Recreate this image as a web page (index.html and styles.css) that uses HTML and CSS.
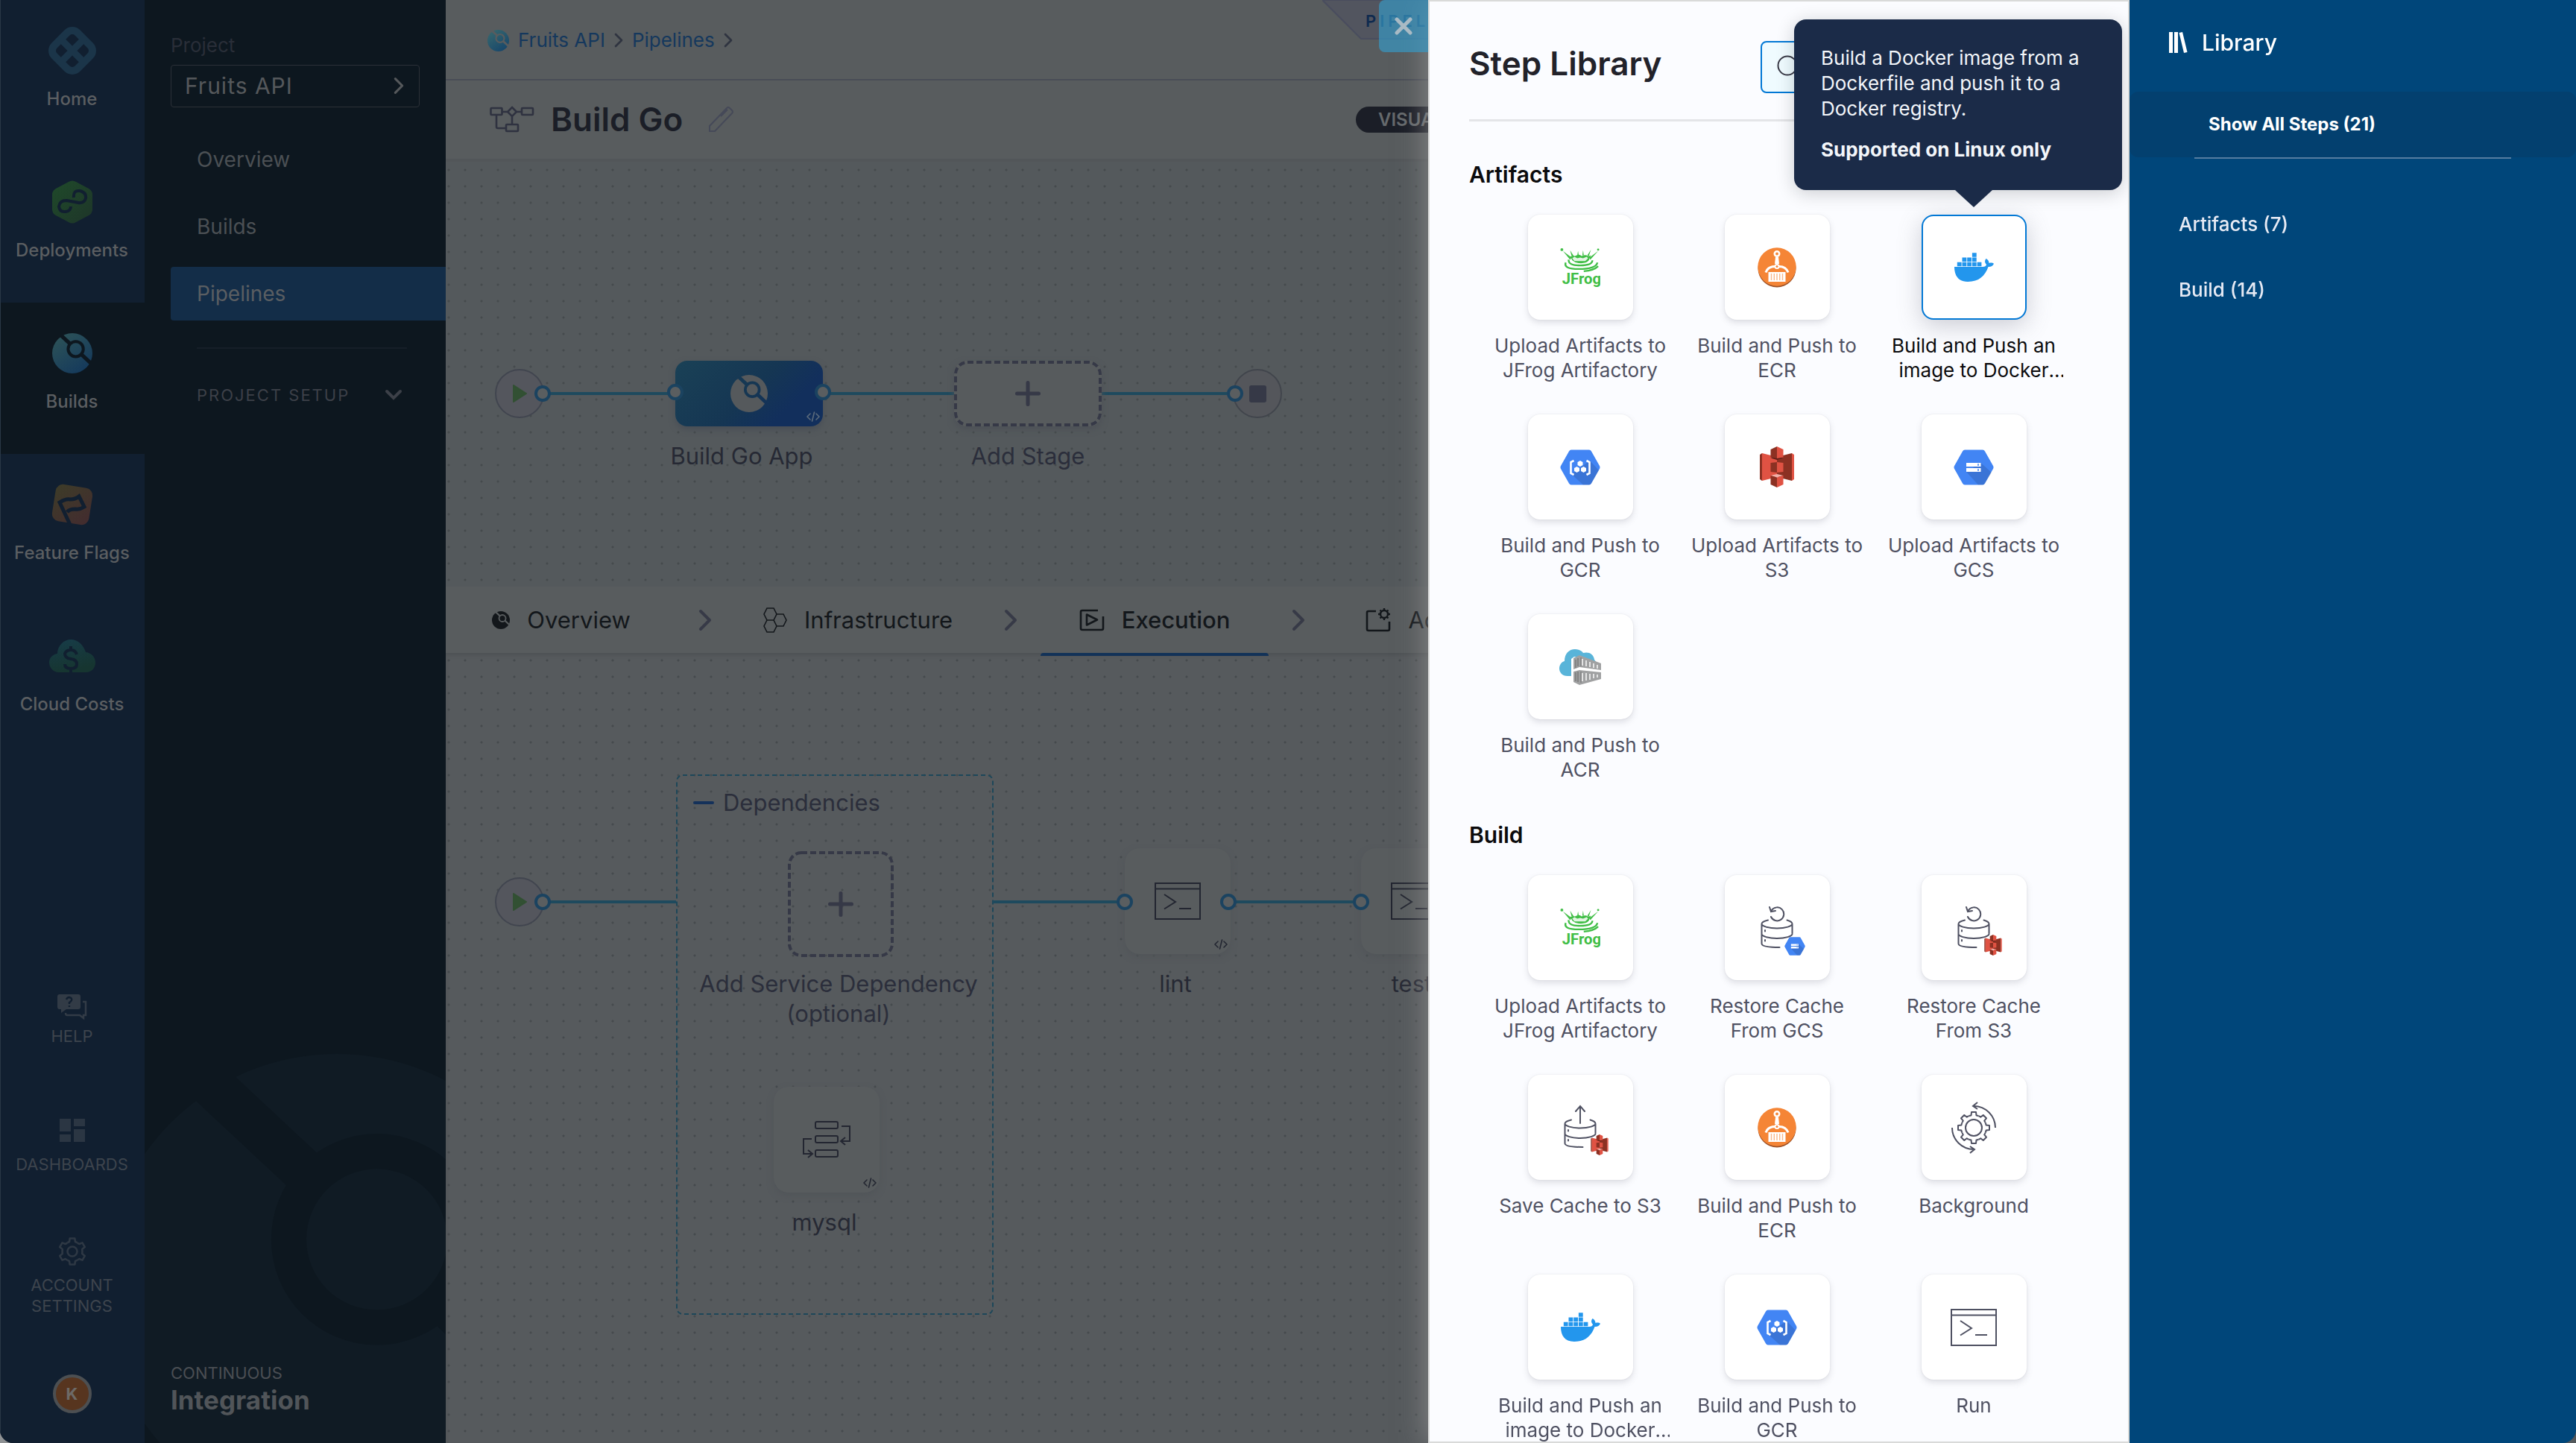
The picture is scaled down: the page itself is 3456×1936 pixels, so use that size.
FILE: index.html
```html
<!DOCTYPE html>
<html lang="en">
<head>
<meta charset="utf-8">
<title>Build Go - Pipeline Studio</title>
<link rel="stylesheet" href="styles.css">
</head>
<body>
<svg class="defs" width="0" height="0" aria-hidden="true">
  <defs>
    <linearGradient id="g-ci" x1="0" y1="0" x2="0.7" y2="1"><stop offset="0" stop-color="#2f5557"/><stop offset="1" stop-color="#153a5c"/></linearGradient>
    <linearGradient id="g-crumb" x1="0" y1="0" x2="0.7" y2="1"><stop offset="0" stop-color="#3a6a6e"/><stop offset="1" stop-color="#17476b"/></linearGradient>
    <linearGradient id="g-cd" x1="0" y1="0" x2="1" y2="1"><stop offset="0" stop-color="#1f4a2a"/><stop offset="1" stop-color="#1e3529"/></linearGradient>
    <linearGradient id="g-ff" x1="0" y1="0" x2="1" y2="1"><stop offset="0" stop-color="#3d3c28"/><stop offset="1" stop-color="#432b2f"/></linearGradient>
    <linearGradient id="g-cc" x1="0" y1="0" x2="0.3" y2="1"><stop offset="0" stop-color="#173c49"/><stop offset="1" stop-color="#163530"/></linearGradient>
    <mask id="m-ci" maskUnits="userSpaceOnUse" x="-100" y="-100" width="200" height="200">
      <circle r="100" fill="#fff"/>
      <path d="M17-21L-90-121M17-21L124 79" stroke="#000" stroke-width="19"/>
      <circle cx="17" cy="-21" r="45" fill="#000"/>
      <circle cx="17" cy="-21" r="30" fill="#fff"/>
    </mask>
    <symbol id="i-ci" viewBox="-100 -100 200 200"><rect x="-100" y="-100" width="200" height="200" mask="url(#m-ci)"/></symbol>
    <symbol id="i-code" viewBox="0 0 18 14"><path d="M5 3L1 7l4 4M13 3l4 4-4 4M10.500 1l-3 12" fill="none" stroke="currentColor" stroke-width="1.600" stroke-linecap="round" stroke-linejoin="round"/></symbol>
    <symbol id="i-chev" viewBox="0 0 18 30"><path d="M3 3l12 12L3 27" fill="none" stroke="currentColor" stroke-width="4" stroke-linecap="round" stroke-linejoin="round"/></symbol>
    <symbol id="i-plus" viewBox="0 0 34 34"><path d="M17 2.500v29M2.500 17h29" stroke="currentColor" stroke-width="5" stroke-linecap="round"/></symbol>
    <symbol id="i-term" viewBox="0 0 64 50"><path d="M2 1h60v48H2zM2 8.500h60M14 16l15 10-15 9.500M34 35h16" fill="none" stroke="currentColor" stroke-width="2"/></symbol>
    <symbol id="i-s3" viewBox="0 0 46 55">
      <path d="M0 11l3-2v37l-3-2z" fill="#8c3123"/><path d="M3 9l20 5v27L3 46z" fill="#e05243"/>
      <path d="M43 9l-20 5v27l20 5z" fill="#8c3123"/><path d="M46 11l-3-2v37l3-2z" fill="#e05243"/>
      <path d="M14.500 22l8.500-1v14l-8.500-1z" fill="#8c3123"/><path d="M31.500 22L23 21v14l8.500-1z" fill="#e05243"/>
      <path d="M14.500 15.500L23 14l8.500 1.500L23 18z" fill="#5e1f18"/><path d="M14.500 39L23 37l8.500 2-8.500 2.500z" fill="#f2b0a9"/>
      <path d="M14.500 4L23 0v16l-8.500-1.500z" fill="#8c3123"/><path d="M31.500 4L23 0v16l8.500-1.500z" fill="#e05243"/>
      <path d="M14.500 39l8.500 2.500V55l-8.500-4z" fill="#8c3123"/><path d="M31.500 39L23 41.500V55l8.500-4z" fill="#e05243"/>
    </symbol>
    <symbol id="i-hex" viewBox="0 0 54 48"><path d="M15 .5h24q2 0 3 2L53 22q1 2 0 4L42 45.500q-1 2-3 2H15q-2 0-3-2L1 26q-1-2 0-4L12 2.500q1-2 3-2z" fill="#4285f4"/></symbol>
    <symbol id="i-gcs" viewBox="0 0 54 48"><use href="#i-hex"/><path d="M36.500 18L51 31l-9 14.500q-1 2-3 2h-6L17 30z" fill="#000" opacity=".12"/><path d="M17 18h19.500v5H17zM17 25h19.500v5H17z" fill="#fff"/><path d="M33 19v3M33 26v3" stroke="#4285f4" stroke-width="1.500"/></symbol>
    <symbol id="i-gcr" viewBox="0 0 54 48"><use href="#i-hex"/><path d="M40 15l12 13-10 17.500q-1 2-3 2H31L15 33z" fill="#000" opacity=".12"/><path d="M18.500 15l-4 2v15l4 2M35.500 15l4 2v15l-4 2" fill="none" stroke="#fff" stroke-width="2.600"/><path d="M27 15l3.500 2v4L27 23l-3.500-2v-4zM22.500 23l3.500 2v4l-3.500 2-3.500-2v-4zM31.500 23l3.500 2v4l-3.500 2-3.500-2v-4z" fill="#fff"/></symbol>
    <symbol id="i-ecr" viewBox="0 0 52 54">
      <circle cx="26" cy="28" r="25.500" fill="#9d5025"/><circle cx="26" cy="26" r="25.700" fill="#f58536"/>
      <circle cx="26" cy="8.500" r="3.200" fill="none" stroke="#fff" stroke-width="2.600"/><path d="M24 13h4l1 9h-6z" fill="#fff"/>
      <circle cx="26" cy="25.500" r="2.600" fill="none" stroke="#fff" stroke-width="2"/>
      <path d="M23 25.500q-9 0-12 8M29 25.500q9 0 12 8" fill="none" stroke="#fff" stroke-width="3.200"/>
      <path d="M14.500 33h23v13h-23z" fill="#fff"/><path d="M18.500 35v9M22.300 35v9M26 35v9M29.700 35v9M33.500 35v9" stroke="#f9b78a" stroke-width="1.400"/>
    </symbol>
    <symbol id="i-docker" viewBox="0 0 53 39">
      <path d="M0 19h38c3 0 4.500-1 5-3-3-3-2-6-.5-8 2.500 1 4 3.500 4 6 2.500-.8 5-.5 6.500.8-1 3-4 4.500-7.500 4.300C41 31.500 33 39 18 39 5 39 0 30.500 0 19z" fill="#2396ed"/>
      <path d="M3.800 12.700h5.800v5.600H3.800zM10.500 12.700h5.800v5.600h-5.800zM17.200 12.700H23v5.600h-5.800zM23.900 12.700h5.800v5.600h-5.800zM30.600 12.700h5.800v5.600h-5.800zM10.500 6.500h5.800v5.500h-5.800zM17.200 6.500H23V12h-5.800zM23.900 6.500h5.800V12h-5.800zM23.900.3h5.800v5.500h-5.800z" fill="#2396ed"/>
    </symbol>
    <symbol id="i-jfrog" viewBox="0 0 56 56">
      <g fill="#40be46"><path d="M14 12q2 1 4-1 2 2 5 0 4-2 7 1 4-2 7-1 2 2 6 0l-3 7q-3 4-11 4t-12-4z"/>
      <circle cx="2.500" cy="3" r="2"/><path d="M4 5l12 9-2 3z"/><path d="M53 5L41 14l1 3z"/><circle cx="53" cy="3" r="1.500"/><path d="M14 4l5 8h-3zM43 3l-3 9-2-1zM25 5l1 6h-2zM32 4l-1 7h2z"/></g>
      <g fill="none" stroke="#40be46" stroke-width="2.400"><path d="M12 17q-1 8 16 8t17-7"/><path d="M8 21q-4 9 18 9 24 0 26-9"/><path d="M33 33q14-1 20-7"/></g>
      <path d="M17 15l3-2 4 2 4-1 4 1 5-2 2 2-4 4H20z" fill="#fff" opacity=".85"/>
      <text x="30" y="51" class="jfrog-text" text-anchor="middle">JFrog</text>
    </symbol>
    <symbol id="i-acr" viewBox="0 0 56 48">
      <path d="M16 36h-5C4 36 0 31 0 26c0-5 3-9 7-10C7 6 13 0 21 0c5 0 9 2 11 5 7-2 14 1 15 9l3 4-30-8-4 3z" fill="#59b4d9"/>
      <path d="M19 12l8-4 29 11v9L27 24l-8 3z" fill="#a0a1a2"/><path d="M19 30l8-2 29 3v9l-29 8-8-4z" fill="#a0a1a2"/>
      <path d="M22 14v11M25 12v11M22 31v12M25 30v14" stroke="#7a7a7a" stroke-width="1.500"/>
      <path d="M31 13v9M36 15v8M41 17v7M46 19v6M51 21v5M31 32v11M36 32v10M41 33v8M46 33v6M51 34v4" stroke="#e3e3e3" stroke-width="2"/>
      <path d="M29 11v12M29 30v15" stroke="#7a7a7a" stroke-width="1.200"/>
    </symbol>
    <symbol id="i-db" viewBox="0 0 76 76"><g fill="none" stroke="#4f5162" stroke-width="2" stroke-linecap="round">
      <path d="M26 27.500q-8.500 2-8.500 5c0 3 9 6 20.500 6s20.500-3 20.500-6q0-3-7-5M17.500 33v26q0 5 24 5M58.500 33v12M17.500 46c0 3 9 6 20.500 6s20.500-3 20.500-6"/><path d="M22 41v1.500M22 54v1.500"/></g></symbol>
    <symbol id="i-restore" viewBox="0 0 76 76"><use href="#i-db"/><path d="M31 14a9 9 0 1 1-1 9M28 10l2 6 6-1" fill="none" stroke="#4f5162" stroke-width="2" stroke-linecap="round"/></symbol>
    <symbol id="i-save" viewBox="0 0 76 76"><use href="#i-db"/><path d="M38 32V9M32 16l6-7 6 7" fill="none" stroke="#4f5162" stroke-width="2" stroke-linecap="round"/></symbol>
    <symbol id="i-gear8" viewBox="-35 -35 70 70">
      <path id="t8" d="M-6.500-15.700Q-5-16.400-3.500-16.600L-3-21H3l.5 4.400q1.500.2 3 .9" fill="none" stroke="currentColor" stroke-width="2" stroke-linejoin="round"/>
      <use href="#t8" transform="rotate(45)"/><use href="#t8" transform="rotate(90)"/><use href="#t8" transform="rotate(135)"/><use href="#t8" transform="rotate(180)"/><use href="#t8" transform="rotate(225)"/><use href="#t8" transform="rotate(270)"/><use href="#t8" transform="rotate(315)"/>
      <circle r="11" fill="none" stroke="currentColor" stroke-width="2"/>
      <path d="M29 0A29 29 0 0 0 0-29M5-34l-6 5 6 4M-29 0A29 29 0 0 0 0 29M-5 34l6-5-6-4" fill="none" stroke="currentColor" stroke-width="2"/>
    </symbol>
  </defs>
</svg>

<div class="app">
  <nav class="rail" aria-label="Modules">
    <a class="module" href="#home"><svg class="module-icon" viewBox="-34 -34 68 68" aria-hidden="true"><g transform="rotate(45)" fill="none" stroke="#1b3549"><rect x="-22" y="-22" width="44" height="44" rx="10" stroke-width="10"/><path d="M0-24v48M-24 0h48" stroke-width="9"/></g></svg>Home</a>
    <a class="module" href="#deployments"><svg class="module-icon" viewBox="-34 -34 68 68" aria-hidden="true"><path d="M-5-27q5-3 10 0l17 9q5 3 5 8v20q0 5-5 8L5 27q-5 3-10 0l-17-9q-5-3-5-8v-20q0-5 5-8z" fill="url(#g-cd)"/><path d="M2-6q-1-10 8-9 9 2 8 10-2 7-10 6Q-2-1-8-2q-9 0-10 8 1 8 9 7 7-1 7-7" fill="none" stroke="#111f30" stroke-width="4"/></svg>Deployments</a>
    <a class="module is-active" href="#builds"><svg class="module-icon ci-mark" viewBox="-34 -34 68 68" aria-hidden="true"><use href="#i-ci" x="-27" y="-27" width="54" height="54" fill="url(#g-ci)"/></svg>Builds</a>
    <a class="module" href="#flags"><svg class="module-icon" viewBox="-34 -34 68 68" aria-hidden="true"><rect x="-25" y="-25" width="50" height="50" rx="10" fill="url(#g-ff)" transform="rotate(9)"/><path d="M-2 29l-15-32q8-5 14-4 7 0 12-4L16 3q-6 4-12 3-8 0-11 4" fill="none" stroke="#111f30" stroke-width="5"/></svg>Feature Flags</a>
    <a class="module" href="#costs"><svg class="module-icon" viewBox="-34 -34 68 68" aria-hidden="true"><path d="M-18 22h36c8 0 13-6 13-13S26-4 18-5c-3-10-11-17-20-17S-20-14-20-3c-7 1-11 6-11 12s5 13 13 13z" fill="url(#g-cc)"/><path d="M-2-13v5M-2 15v8M6-2q-2-6-8-6t-8 5q0 6 8 7t8 7q0 6-8 6t-8-6" fill="none" stroke="#111f30" stroke-width="4"/></svg>Cloud Costs</a>
    <div class="rail-foot">
      <a class="util util-help" href="#help"><svg width="40" height="38" viewBox="0 0 40 38" aria-hidden="true"><path d="M3 2h25q3 0 3 3v14q0 3-3 3H12l-7 5v-5H3q-3 0-3-3V5q0-3 3-3z" fill="#323b46"/><path d="M34 12h4v18h-3v4l-5-4H13q-2 0-2-3" fill="none" stroke="#323b46" stroke-width="2.500"/><path d="M12 9q1-3 4-3 4 1 3 4-1 2-3 3v2M16 17v2" fill="none" stroke="#111f30" stroke-width="2.400"/></svg>HELP</a>
      <a class="util" href="#dashboards"><svg width="34" height="38" viewBox="0 0 34 38" aria-hidden="true"><path d="M0 3h15v17H0zM19 3h15v10H19zM0 24h15v10H0zM19 17h15v17H19z" fill="#2b3643"/></svg>DASHBOARDS</a>
      <a class="util util-account" href="#account"><svg width="38" height="38" viewBox="-19 -19 38 38" aria-hidden="true"><g fill="none" stroke="#2e3844" stroke-width="2.600" stroke-linejoin="round"><path id="t6" d="M-6.700-11.600Q-5-12.500-4-13l.7-4.500h6.600L4-13q1 .5 2.700 1.400"/><use href="#t6" transform="rotate(60)"/><use href="#t6" transform="rotate(120)"/><use href="#t6" transform="rotate(180)"/><use href="#t6" transform="rotate(240)"/><use href="#t6" transform="rotate(300)"/><circle r="6.500"/></g></svg>ACCOUNT SETTINGS</a>
      <button class="avatar" type="button">K</button>
    </div>
  </nav>

  <aside class="project-nav">
    <svg class="watermark" viewBox="-100 -100 200 200" aria-hidden="true"><use href="#i-ci" x="-100" y="-100" width="200" height="200"/></svg>
    <p class="project-label">Project</p>
    <button class="project-select" type="button">Fruits API<svg width="14" height="24" viewBox="0 0 18 30" aria-hidden="true"><use href="#i-chev"/></svg></button>
    <ul class="menu">
      <li><a href="#overview">Overview</a></li>
      <li><a href="#builds-list">Builds</a></li>
      <li><a class="is-current" href="#pipelines">Pipelines</a></li>
    </ul>
    <button class="setup" type="button">PROJECT SETUP<svg width="24" height="16" viewBox="0 0 24 16" aria-hidden="true"><path d="M3 3l9 9 9-9" fill="none" stroke="currentColor" stroke-width="4" stroke-linecap="round"/></svg></button>
    <p class="product"><span>CONTINUOUS</span><strong>Integration</strong></p>
  </aside>

  <main class="studio">
    <div class="crumbs">
      <svg width="29" height="29" aria-hidden="true"><use href="#i-ci" width="29" height="29" fill="url(#g-crumb)"/></svg>
      <a href="#project">Fruits API</a>
      <svg class="crumb-sep" width="12" height="20" aria-hidden="true"><use href="#i-chev"/></svg>
      <a href="#pipelines">Pipelines</a>
      <svg class="crumb-sep" width="12" height="20" aria-hidden="true"><use href="#i-chev"/></svg>
      <div class="studio-tag"><svg viewBox="0 0 506 54" width="506" height="54" aria-hidden="true"><path d="M0 0l52 52h402L506 0z" fill="#52555f" stroke="#494d5e" stroke-width="2"/></svg><span>PIPELINE STUDIO</span></div>
    </div>
    <header class="title-bar">
      <svg width="60" height="36" viewBox="0 0 60 36" aria-hidden="true"><g fill="none" stroke="#2f3240" stroke-width="2.600"><rect x="1.500" y="3" width="15" height="9" rx="1"/><rect x="43" y="3" width="15" height="9" rx="1"/><rect x="22" y="25" width="16" height="9" rx="1"/><path d="M30 2l6 6-6 6-6-6zM17 8h7M36 8h7M30 14v11M9 12v16q0 2 2 2h11"/></g></svg>
      <h1>Build Go</h1>
      <svg width="36" height="36" viewBox="0 0 36 36" aria-hidden="true"><path d="M2 34v-7L25 3q2-2 4 0l3 3q2 2 0 4L9 34z M17 14l9-9" fill="none" stroke="#454958" stroke-width="2"/></svg>
      <div class="view-toggle"><button type="button" class="is-on">VISUAL</button><button type="button">YAML</button></div>
    </header>

    <section class="canvas canvas-stages" aria-label="Stages">
      <svg class="wires" width="1320" height="570" aria-hidden="true">
        <path d="M140 311h158M516 311h166M880 311h168" stroke="#1e4a5e" stroke-width="4"/>
        <circle cx="99" cy="311" r="32" fill="#54565d" stroke="#41454f" stroke-width="2"/><path d="M91 300l17 11-17 11z" fill="#325033" stroke="#325033" stroke-width="2" stroke-linejoin="round"/>
        <circle cx="1089" cy="311" r="32" fill="#54565b" stroke="#41454c" stroke-width="2"/><rect x="1078" y="300" width="23" height="23" rx="3" fill="#363947"/>
        <g fill="#5a5e60" stroke="#1b4360" stroke-width="4"><circle cx="130" cy="311" r="9"/><circle cx="1059" cy="311" r="9"/></g>
      </svg>
      <div class="node node-stage">
        <button class="stage" type="button" aria-label="Build Go App stage"><svg width="50" height="50" aria-hidden="true"><use href="#i-ci" width="50" height="50" fill="#55595c"/></svg><svg class="code" width="18" height="14" aria-hidden="true"><use href="#i-code"/></svg></button>
        <span class="node-label">Build Go App</span>
      </div>
      <svg class="wires" width="1320" height="570" aria-hidden="true"><g fill="#5a5e60" stroke="#1b4360" stroke-width="4"><circle cx="308" cy="309" r="9"/><circle cx="506" cy="309" r="9"/></g></svg>
      <div class="node node-add-stage">
        <button class="stage-add" type="button" aria-label="Add Stage"><svg class="dash" width="198" height="88" aria-hidden="true"><rect x="2" y="2" width="194" height="84" rx="16"/></svg><svg width="34" height="34" aria-hidden="true"><use href="#i-plus"/></svg></button>
        <span class="node-label">Add Stage</span>
      </div>
    </section>

    <div class="tabs" role="tablist">
      <button class="tab" role="tab" type="button"><svg width="24" height="24" aria-hidden="true"><use href="#i-ci" width="24" height="24" fill="#13171b"/></svg>Overview</button>
      <svg class="tab-sep" width="18" height="30" aria-hidden="true"><use href="#i-chev"/></svg>
      <button class="tab" role="tab" type="button"><svg width="32" height="34" viewBox="0 0 32 34" aria-hidden="true"><path d="M5 1h9l4 8-4 8H5L1 9zM5 17h9l4 8-4 8H5l-4-8zM18 9h9l4 8-4 8h-9l-4-8z" fill="none" stroke="#13171b" stroke-width="1.600"/></svg>Infrastructure</button>
      <svg class="tab-sep" width="18" height="30" aria-hidden="true"><use href="#i-chev"/></svg>
      <button class="tab is-on" role="tab" type="button" aria-selected="true"><svg width="34" height="30" viewBox="0 0 34 30" aria-hidden="true"><path d="M25 2H4Q2 2 2 4v22q0 2 2 2h26q2 0 2-2V10" fill="none" stroke="#13171b" stroke-width="2.600"/><path d="M10 7.500v14l14-7z" fill="none" stroke="#13171b" stroke-width="2.600" stroke-linejoin="round"/></svg>Execution</button>
      <svg class="tab-sep" width="18" height="30" aria-hidden="true"><use href="#i-chev"/></svg>
      <button class="tab" role="tab" type="button"><svg width="34" height="34" viewBox="0 0 34 34" aria-hidden="true"><path d="M14 5H4Q2 5 2 7v22q0 2 2 2h26q2 0 2-2V19" fill="none" stroke="#13171b" stroke-width="2.600"/><circle cx="25" cy="9" r="5" fill="none" stroke="#13171b" stroke-width="2.400"/><path d="M25 1v3M25 14v3M17 9h3M30 9h3M19.500 3.500l2 2M28.500 12.500l2 2M30.500 3.500l-2 2M21.500 12.500l-2 2" stroke="#13171b" stroke-width="2.400"/></svg>Advanced</button>
    </div>

    <section class="canvas canvas-steps" aria-label="Execution steps">
      <svg class="wires" width="1320" height="1060" aria-hidden="true">
        <rect x="310" y="164" width="424" height="723" rx="8" fill="none" stroke="#1d4759" stroke-width="2" stroke-dasharray="6 4"/>
        <path d="M140 334h169M734 334h166M1060 334h157" stroke="#1e4a5e" stroke-width="4"/>
        <circle cx="99" cy="334" r="32" fill="#54565d" stroke="#41454f" stroke-width="2"/><path d="M91 323l17 11-17 11z" fill="#325033" stroke="#325033" stroke-width="2" stroke-linejoin="round"/>
        <circle cx="130" cy="334" r="9" fill="#5a5e60" stroke="#1b4360" stroke-width="4"/>
      </svg>
      <button class="group-title" type="button"><svg width="28" height="4" aria-hidden="true"><rect width="28" height="4" rx="2" fill="#14315a"/></svg>Dependencies</button>
      <div class="node node-add-dep">
        <button class="step-add" type="button" aria-label="Add Service Dependency"><svg class="dash" width="142" height="142" aria-hidden="true"><rect x="2" y="2" width="138" height="138" rx="16"/></svg><svg width="34" height="34" aria-hidden="true"><use href="#i-plus"/></svg></button>
        <span class="node-label">Add Service Dependency (optional)</span>
      </div>
      <div class="node node-mysql">
        <button class="step" type="button" aria-label="mysql"><svg width="66" height="52" viewBox="0 0 66 52" aria-hidden="true"><g fill="none" stroke="#232631" stroke-width="2"><rect x="18" y="2" width="30" height="9" rx="2"/><rect x="18" y="21" width="30" height="9" rx="2"/><rect x="18" y="40" width="30" height="9" rx="2"/><path d="M53 8h11v20H53M58 23l-6 5 6 5M13 25H2v20h11M8 40l6 5-6 5"/></g></svg><svg class="code" width="18" height="14" aria-hidden="true"><use href="#i-code"/></svg></button>
        <span class="node-label">mysql</span>
      </div>
      <div class="node node-lint">
        <button class="step" type="button" aria-label="lint"><svg width="64" height="50" aria-hidden="true"><use href="#i-term"/></svg><svg class="code" width="18" height="14" aria-hidden="true"><use href="#i-code"/></svg></button>
        <span class="node-label">lint</span>
      </div>
      <div class="node node-test">
        <button class="step" type="button" aria-label="test"><svg width="64" height="50" aria-hidden="true"><use href="#i-term"/></svg></button>
        <span class="node-label">test</span>
      </div>
      <svg class="wires" width="1320" height="1060" aria-hidden="true"><g fill="#5a5e60" stroke="#1b4360" stroke-width="4"><circle cx="911" cy="334" r="9"/><circle cx="1050" cy="334" r="9"/><circle cx="1228" cy="334" r="9"/></g></svg>
    </section>
  </main>
</div>

<div class="drawer" role="dialog" aria-label="Step Library">
  <button class="drawer-close" type="button" aria-label="Close"><svg width="24" height="24" viewBox="0 0 24 24" aria-hidden="true"><path d="M3 3l18 18M21 3L3 21" stroke="#a9bac4" stroke-width="5" stroke-linecap="round"/></svg></button>
  <section class="library">
    <header class="library-head">
      <h2>Step Library</h2>
      <label class="search"><svg width="36" height="36" viewBox="0 0 36 36" aria-hidden="true"><circle cx="16" cy="16" r="12.500" fill="none" stroke="#383946" stroke-width="2"/><path d="M25 25l8 8" stroke="#383946" stroke-width="2"/></svg><input type="search" aria-label="Search steps"></label>
    </header>
    <h3>Artifacts</h3>
    <div class="steps">
      <button class="pick" type="button"><span class="tile"><svg width="54" height="54"><use href="#i-jfrog"/></svg></span><span class="pick-label">Upload Artifacts to JFrog Artifactory</span></button>
      <button class="pick" type="button"><span class="tile"><svg width="52" height="54"><use href="#i-ecr"/></svg></span><span class="pick-label">Build and Push to ECR</span></button>
      <button class="pick is-hover" type="button"><span class="tile"><svg width="53" height="39"><use href="#i-docker"/></svg></span><span class="pick-label">Build and Push an image to Docker Registry</span>
        <span class="tooltip" role="tooltip"><span>Build a Docker image from a Dockerfile and push it to a Docker registry.</span><strong>Supported on Linux only</strong></span></button>
      <button class="pick" type="button"><span class="tile"><svg width="54" height="48"><use href="#i-gcr"/></svg></span><span class="pick-label">Build and Push to GCR</span></button>
      <button class="pick" type="button"><span class="tile"><svg width="46" height="55"><use href="#i-s3"/></svg></span><span class="pick-label">Upload Artifacts to S3</span></button>
      <button class="pick" type="button"><span class="tile"><svg width="54" height="48"><use href="#i-gcs"/></svg></span><span class="pick-label">Upload Artifacts to GCS</span></button>
      <button class="pick" type="button"><span class="tile"><svg width="56" height="48"><use href="#i-acr"/></svg></span><span class="pick-label">Build and Push to ACR</span></button>
    </div>
    <h3>Build</h3>
    <div class="steps">
      <button class="pick" type="button"><span class="tile"><svg width="54" height="54"><use href="#i-jfrog"/></svg></span><span class="pick-label">Upload Artifacts to JFrog Artifactory</span></button>
      <button class="pick" type="button"><span class="tile"><svg width="76" height="76" viewBox="0 0 76 76"><use href="#i-restore"/><use href="#i-gcs" x="48" y="50" width="28" height="25"/></svg></span><span class="pick-label">Restore Cache From GCS</span></button>
      <button class="pick" type="button"><span class="tile"><svg width="76" height="76" viewBox="0 0 76 76"><use href="#i-restore"/><use href="#i-s3" x="52" y="47" width="24" height="28"/></svg></span><span class="pick-label">Restore Cache From S3</span></button>
      <button class="pick" type="button"><span class="tile"><svg width="76" height="76" viewBox="0 0 76 76"><use href="#i-save"/><use href="#i-s3" x="52" y="47" width="24" height="28"/></svg></span><span class="pick-label">Save Cache to S3</span></button>
      <button class="pick" type="button"><span class="tile"><svg width="52" height="54"><use href="#i-ecr"/></svg></span><span class="pick-label">Build and Push to ECR</span></button>
      <button class="pick" type="button"><span class="tile"><svg width="70" height="70"><use href="#i-gear8"/></svg></span><span class="pick-label">Background</span></button>
      <button class="pick" type="button"><span class="tile"><svg width="53" height="39"><use href="#i-docker"/></svg></span><span class="pick-label">Build and Push an image to Docker Registry</span></button>
      <button class="pick" type="button"><span class="tile"><svg width="54" height="48"><use href="#i-gcr"/></svg></span><span class="pick-label">Build and Push to GCR</span></button>
      <button class="pick" type="button"><span class="tile"><svg width="64" height="50"><use href="#i-term"/></svg></span><span class="pick-label">Run</span></button>
    </div>
  </section>
  <nav class="categories" aria-label="Library">
    <h2><svg width="25" height="28" viewBox="0 0 25 28" aria-hidden="true"><path d="M0 0h5v28H0zM7 0h5v28H7zM13.500 1l4.500-1 6.500 27-4.500 1z" fill="#fff"/></svg>Library</h2>
    <button class="show-all" type="button">Show All Steps (21)</button>
    <button class="category" type="button">Artifacts (7)</button>
    <button class="category" type="button">Build (14)</button>
  </nav>
</div>
</body>
</html>
```
FILE: styles.css
```css
* { box-sizing: border-box; }
body { margin: 0; background: #8f9294; font-family: Inter, "Liberation Sans", sans-serif; font-size: 26px; line-height: 32px; overflow: hidden; }
button, input { font: inherit; color: inherit; background: none; border: 0; padding: 0; margin: 0; }
a { color: inherit; text-decoration: none; }
h1, h2, h3, p, ul { margin: 0; padding: 0; list-style: none; }
svg { flex: none; display: block; }
.defs { position: absolute; }

.app { display: flex; min-height: 100vh; background: #0d171f; border-bottom-left-radius: 18px; overflow: hidden; }

/* module rail */
.rail { flex: none; width: 194px; display: flex; flex-direction: column; background: #111f30; border-left: 1px solid #2a3846; color: #5b5e61; font-size: 24px; font-weight: 500; }
.module { display: flex; flex-direction: column; align-items: center; gap: 15px; height: 203px; padding: 34px 2px 0 0; white-space: nowrap; }
.module.is-active { background: #0d171f; }
.module-icon { width: 68px; height: 68px; }
.rail-foot { margin-top: auto; display: flex; flex-direction: column; align-items: center; padding: 0 2px 40px 0; color: #3d444d; font-size: 22px; line-height: 28px; font-weight: 500; }
.util { display: flex; flex-direction: column; align-items: center; gap: 12px; width: 160px; margin-bottom: 84px; text-align: center; font-weight: 400; }
.util-help { gap: 6px; margin-bottom: 94px; }
.util-account { width: 120px; margin-bottom: 78px; }
.avatar { width: 52px; height: 52px; border-radius: 50%; border: 4px solid #4c4f52; background: #57351f; color: #6d6a67; font-size: 22px; font-weight: 700; }

/* project navigation */
.project-nav { flex: none; position: relative; width: 404px; display: flex; flex-direction: column; padding: 45px 0 36px 35px; overflow: hidden; color: #4b5054; }
.watermark { position: absolute; left: -57px; bottom: -108px; width: 630px; height: 630px; fill: #101b24; }
.project-nav > :not(.watermark) { position: relative; }
.project-label { color: #292e38; }
.project-select { display: flex; align-items: center; justify-content: space-between; width: 334px; height: 57px; margin-top: 10px; padding: 0 20px 2px 18px; border: 1px solid #2b3037; border-radius: 4px; font-size: 30px; letter-spacing: 1px; color: #55585b; }
.menu { display: flex; flex-direction: column; gap: 18px; margin-top: 34px; }
.menu a { display: flex; align-items: center; height: 72px; padding-left: 35px; border-radius: 4px 0 0 4px; font-size: 28px; line-height: 34px; }
.menu .is-current { background: #132d48; color: #5a5e62; }
.setup { display: flex; align-items: center; justify-content: space-between; margin: 36px 52px 0 35px; padding: 48px 6px 0 0; border-top: 2px solid #161e28; font-size: 22px; line-height: 28px; letter-spacing: 2px; color: #3c4048; }
.product { display: flex; flex-direction: column; margin-top: auto; color: #4a4e53; font-size: 22px; line-height: 28px; }
.product strong { font-size: 35px; line-height: 44px; color: #515559; }

/* pipeline studio */
.studio { flex: 1; min-width: 0; display: flex; flex-direction: column; background: #585c5e; color: #13171b; }
.crumbs { position: relative; display: flex; align-items: center; gap: 12px; height: 108px; padding: 2px 0 0 56px; border-bottom: 2px solid #494d56; color: #15385d; }
.crumb-sep { color: #2f3440; }
.studio-tag { position: absolute; top: 0; left: 50%; margin-left: -253px; }
.studio-tag span { position: absolute; top: 12px; left: 58px; font-size: 22px; font-weight: 600; letter-spacing: 5px; white-space: nowrap; color: #0f2a4f; }
.title-bar { position: relative; display: flex; align-items: center; height: 109px; padding: 0 0 2px 59px; border-bottom: 4px solid #525659; }
.title-bar h1 { margin: 0 34px 0 22px; font-size: 44px; line-height: 52px; font-weight: 600; color: #1b1e27; }
.view-toggle { position: absolute; left: 50%; top: 35px; margin-left: -208px; display: flex; width: 416px; height: 35px; border-radius: 18px; background: #585c5e; }
.view-toggle button { flex: 1; font-size: 24px; line-height: 30px; font-weight: 600; }
.view-toggle .is-on { border-radius: 18px; background: #1b1e27; color: #65696c; text-align: left; padding-left: 30px; }
.canvas { position: relative; background: #54595c radial-gradient(circle, #454a4d 1px, transparent 2px) -7px 0 / 22px 22px; }
.canvas-stages { height: 570px; }
.canvas-steps { flex: 1; background-color: #565a5d; background-position: -7px -1px; box-shadow: inset 0 3px 4px #4e5255; }
.wires { position: absolute; left: 0; top: 0; pointer-events: none; }
.node { position: absolute; display: flex; flex-direction: column; align-items: center; gap: 20px; }
.node-label { font-size: 31px; line-height: 40px; text-align: center; padding-right: 6px; color: #262934; }
.node-stage { left: 308px; top: 267px; width: 198px; }
.node-stage .node-label { padding-right: 20px; white-space: nowrap; }
.node-add-stage { left: 682px; top: 267px; width: 198px; }
.node-add-stage .node-label, .node-add-dep .node-label { color: #2b2e3b; }
.node-add-stage .node-label { padding-right: 0; }
.node-add-dep { left: 330px; top: 266px; width: 400px; gap: 16px; }
.node-add-dep .node-label { width: 390px; }
.node-mysql { left: 440px; top: 582px; width: 142px; }
.node-lint { left: 911px; top: 262px; width: 142px; }
.node-test { left: 1228px; top: 262px; width: 142px; }
.stage, .stage-add, .step, .step-add { position: relative; display: flex; align-items: center; justify-content: center; }
.stage, .stage-add { width: 198px; height: 88px; border-radius: 16px; }
.stage { background: linear-gradient(135deg, #1a4156, #153653 50%, #122f5c 75%); box-shadow: 0 4px 8px #484e56; color: #5d6c7c; }
.stage-add, .step-add { color: #363947; background: #575b5d; border-radius: 16px; box-shadow: 0 4px 8px #4d5157; }
.step, .step-add { width: 142px; height: 142px; border-radius: 20px; }
.step-add { background: none; box-shadow: none; }
.step { background: #585c5e; box-shadow: 0 4px 8px #515559; color: #232631; }
.dash { position: absolute; inset: 0; fill: none; stroke: #363947; stroke-width: 4; stroke-dasharray: 8 4; }
.code { position: absolute; right: 4px; bottom: 6px; }
.group-title { position: absolute; left: 332px; top: 183px; display: flex; align-items: center; gap: 12px; font-size: 31px; line-height: 36px; color: #2b2e3b; }
.tabs { display: flex; align-items: center; height: 89px; padding-left: 2px; font-size: 31px; line-height: 36px; background: #585c5e; }
.tab { position: relative; flex: none; display: flex; align-items: center; justify-content: center; gap: 23px; min-width: 306px; height: 89px; padding: 0 38px; }
.tab.is-on { font-weight: 500; }
.tab.is-on::after { content: ""; position: absolute; z-index: 1; left: 0; right: 0; bottom: -4px; height: 4px; border-radius: 4px 4px 0 0; background: #123258; }
.tab-sep { margin: 0 31px; color: #373a47; }

/* step library drawer */
.drawer { position: fixed; inset: 0 0 0 auto; width: 1540px; max-width: 100%; display: flex; box-shadow: 0 0 36px 0 rgba(160, 158, 156, .7); }
.drawer-close { position: absolute; right: 100%; top: 0; display: flex; align-items: center; justify-content: center; width: 66px; height: 70px; border-radius: 8px 0 0 8px; background: rgba(54, 154, 198, .68); }
.library { flex: none; width: 941px; padding-left: 53px; overflow: hidden; background: #fbfcff; border: 2px solid #d9dad9; color: #0b0b0d; }
.library-head { display: flex; align-items: center; justify-content: space-between; height: 161px; margin-right: 34px; padding: 16px 0 0; border-bottom: 3px solid #e4e5e8; }
.library-head h2 { margin-top: -8px; font-size: 44px; line-height: 52px; font-weight: 600; color: #22222a; }
.search { display: flex; align-items: center; width: 459px; height: 70px; margin-top: 2px; padding-left: 18px; border: 2px solid #0278d5; border-radius: 8px; background: #effbff; }
.search input { flex: 1; min-width: 0; outline: 0; }
.library h3 { margin: 53px 0 36px; font-size: 30px; line-height: 36px; font-weight: 600; }
.steps { display: grid; grid-template-columns: repeat(3, 240px); gap: 43px 24px; padding-left: 29px; }
.pick { position: relative; display: flex; flex-direction: column; align-items: center; gap: 18px; height: 225px; color: #4f5162; }
.tile { flex: none; display: flex; align-items: center; justify-content: center; width: 141px; height: 141px; border-radius: 16px; background: #fff; box-shadow: 0 0 2px rgba(40, 41, 61, .1), 0 4px 8px rgba(96, 97, 112, .18); }
.pick-label { display: -webkit-box; -webkit-box-orient: vertical; -webkit-line-clamp: 2; overflow: hidden; line-height: 33px; text-align: center; }
.is-hover { color: #0b0b0d; }
.is-hover .tile { border: 2px solid #0278d5; box-shadow: 0 8px 32px rgba(96, 97, 112, .3); }
.tooltip { position: absolute; left: -121px; bottom: 258px; width: 440px; display: flex; flex-direction: column; gap: 21px; padding: 35px 36px 37px; border-radius: 16px; background: #1b2b48; color: #f3f6fa; line-height: 34px; text-align: left; box-shadow: 0 4px 24px rgba(16, 22, 26, .2); }
.tooltip::after { content: ""; position: absolute; left: 216px; top: 100%; border: 25px solid transparent; border-top: 23px solid #1b2b48; border-bottom: 0; }
.tooltip strong { font-weight: 700; }
.jfrog-text { font: 700 21px Roboto, sans-serif; fill: #40be46; }

/* category list */
.categories { flex: 1; display: flex; flex-direction: column; align-items: stretch; background: #00467a; color: #e6eaf4; border-bottom-right-radius: 18px; }
.categories h2 { display: flex; align-items: center; gap: 19px; padding: 39px 0 48px 53px; font-size: 30px; line-height: 36px; font-weight: 500; color: #fff; }
.show-all { position: relative; height: 88px; padding-left: 106px; border-radius: 12px; background: #03406f; text-align: left; font-size: 24px; font-weight: 700; color: #fff; }
.show-all::after { content: ""; position: absolute; left: 87px; right: 87px; top: 100%; height: 2px; background: #557ca0; }
.category { height: 88px; padding-left: 66px; text-align: left; font-weight: 500; }
.show-all + .category { margin-top: 46px; }
```
